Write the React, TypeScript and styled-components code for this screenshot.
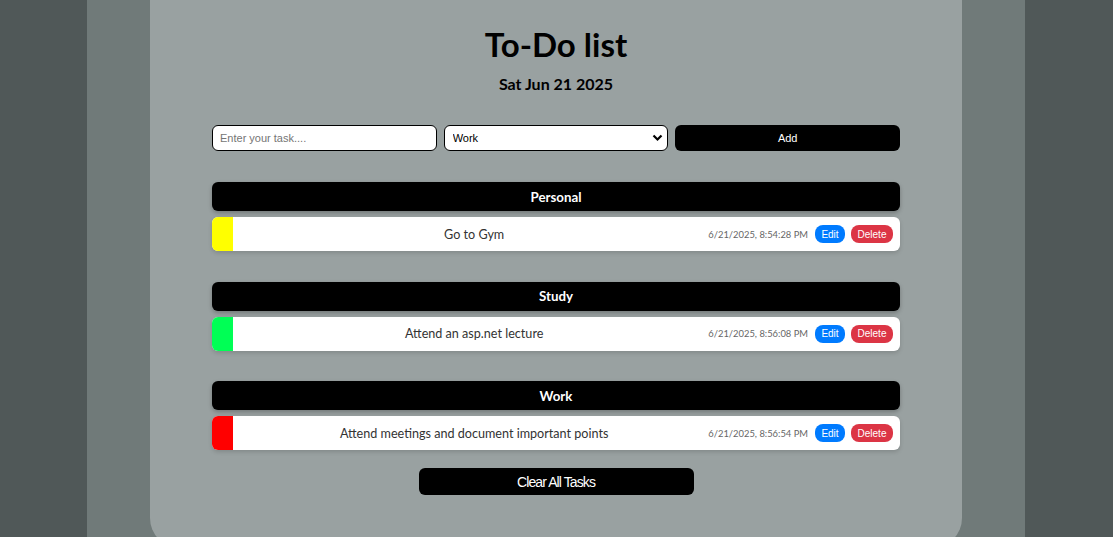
import React from "react";
import styled, { createGlobalStyle } from "styled-components";

const Global = createGlobalStyle`
  html, body { margin: 0; padding: 0; }
  body {
    background: #505858;
    font-family: Lato, "Noto Sans", sans-serif;
    overflow: hidden;
  }
  * { box-sizing: border-box; }
`;

const Page = styled.div`
  width: 938px;
  margin: 0 auto 0 87px;
  background: #707a79;
  min-height: 537px;
  display: flex;
  justify-content: center;
`;

const Card = styled.main`
  width: 812px;
  background: #99a1a1;
  border-radius: 0 0 30px 30px;
  padding: 22px 62px 50px;
  display: flex;
  flex-direction: column;
  align-items: stretch;
  height: 548px;
`;

const Title = styled.h1`
  margin: 0;
  text-align: center;
  font-size: 33px;
  font-weight: 700;
  color: #000;
  line-height: 44px;
`;

const DateLine = styled.h3`
  margin: 8px 0 0;
  text-align: center;
  font-size: 16px;
  font-weight: 700;
  line-height: 20px;
  color: #000;
`;

const Form = styled.div`
  margin-top: 31px;
  display: grid;
  grid-template-columns: 1fr 1fr 1fr;
  gap: 7px;
  height: 26px;
`;

const Input = styled.input`
  height: 26px;
  border: 1px solid #000;
  border-radius: 6px;
  background: #fff;
  padding: 0 7px;
  font-family: "Liberation Sans", Arial, sans-serif;
  font-size: 11px;
  outline: none;
  &::placeholder { color: #757575; }
`;

const SelectWrap = styled.div`
  position: relative;
  height: 26px;
`;

const Select = styled.select`
  appearance: none;
  width: 100%;
  height: 26px;
  border: 1px solid #000;
  border-radius: 6px;
  background: #fff;
  padding: 0 8px;
  font-family: "Liberation Sans", Arial, sans-serif;
  font-size: 11px;
  color: #000;
  outline: none;
`;

const Chevron = styled.svg`
  position: absolute;
  right: 5px;
  top: 9px;
  width: 11px;
  height: 8px;
  pointer-events: none;
`;

const BlackButton = styled.button`
  height: 26px;
  border: none;
  border-radius: 6px;
  background: #000;
  color: #fff;
  font-family: "Liberation Sans", Arial, sans-serif;
  font-size: 11px;
  cursor: pointer;
`;

const Group = styled.section`
  margin-top: 31px;
  display: flex;
  flex-direction: column;
  gap: 6px;
  & + & { margin-top: 30.5px; }
`;

const GroupHeader = styled.div`
  height: 29px;
  background: #000;
  border-radius: 6px;
  color: #fff;
  font-size: 13.3px;
  font-weight: 700;
  display: flex;
  align-items: center;
  justify-content: center;
  box-shadow: 0 2px 4px rgba(0, 0, 0, 0.25);
`;

const Row = styled.div`
  height: 34px;
  background: #fff;
  border-radius: 6px;
  overflow: hidden;
  display: flex;
  align-items: center;
  box-shadow: 0 2px 4px rgba(0, 0, 0, 0.15);
`;

const Strip = styled.div<{ $color: string }>`
  width: 21px;
  height: 100%;
  background: ${(p) => p.$color};
  flex: none;
`;

const TaskText = styled.div`
  flex: 1;
  text-align: center;
  font-size: 12.6px;
  color: #333;
  padding-left: 7px;
`;

const Stamp = styled.span`
  font-size: 9.4px;
  color: #666;
  margin-right: 7px;
`;

const SmallButton = styled.button<{ $bg: string; $w: number }>`
  width: ${(p) => p.$w}px;
  height: 18px;
  border: none;
  border-radius: 8px;
  background: ${(p) => p.$bg};
  color: #fff;
  font-family: "Liberation Sans", Arial, sans-serif;
  font-size: 10px;
  padding: 0;
  margin-right: 6px;
  &:last-child { margin-right: 7px; }
`;

const ClearButton = styled.button`
  align-self: center;
  margin-top: 18px;
  width: 275px;
  height: 27px;
  border: none;
  border-radius: 6px;
  background: #000;
  color: #fff;
  font-family: "Liberation Sans", Arial, sans-serif;
  font-size: 14px;
  letter-spacing: -0.9px;
`;

const groups = [
  { name: "Personal", color: "#ffff00", task: "Go to Gym", time: "6/21/2025, 8:54:28 PM" },
  { name: "Study", color: "#00ff55", task: "Attend an asp.net lecture", time: "6/21/2025, 8:56:08 PM" },
  { name: "Work", color: "#ff0000", task: "Attend meetings and document important points", time: "6/21/2025, 8:56:54 PM" },
];

export default function App() {
  return (
    <>
      <Global />
      <Page>
        <Card>
          <Title>To-Do list</Title>
          <DateLine>Sat Jun 21 2025</DateLine>
          <Form>
            <Input placeholder="Enter your task...." />
            <SelectWrap>
              <Select defaultValue="Work">
                <option>Personal</option>
                <option>Study</option>
                <option>Work</option>
              </Select>
              <Chevron viewBox="0 0 11 8">
                <path d="M1.5 1.5 L5.5 5.5 L9.5 1.5" fill="none" stroke="#000" strokeWidth="2.2" />
              </Chevron>
            </SelectWrap>
            <BlackButton>Add</BlackButton>
          </Form>
          {groups.map((g) => (
            <Group key={g.name}>
              <GroupHeader>{g.name}</GroupHeader>
              <Row>
                <Strip $color={g.color} />
                <TaskText>{g.task}</TaskText>
                <Stamp>{g.time}</Stamp>
                <SmallButton $bg="#007bff" $w={30}>Edit</SmallButton>
                <SmallButton $bg="#dc3545" $w={42}>Delete</SmallButton>
              </Row>
            </Group>
          ))}
          <ClearButton>Clear All Tasks</ClearButton>
        </Card>
      </Page>
    </>
  );
}
